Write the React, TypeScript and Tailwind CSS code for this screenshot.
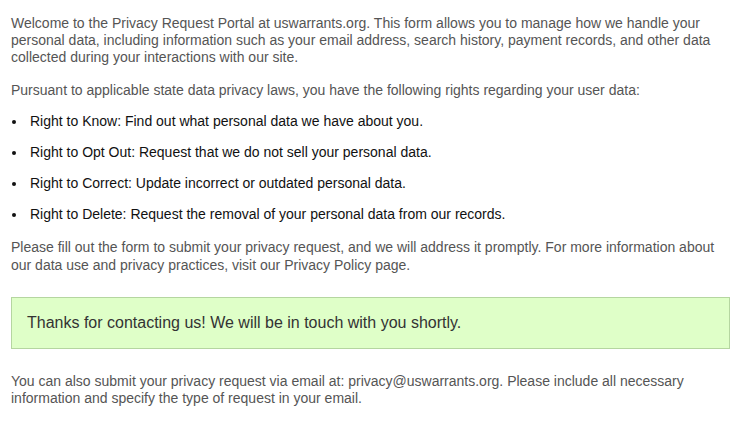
const RIGHTS = [
  'Right to Know: Find out what personal data we have about you.',
  'Right to Opt Out: Request that we do not sell your personal data.',
  'Right to Correct: Update incorrect or outdated personal data.',
  'Right to Delete: Request the removal of your personal data from our records.',
];

export default function App() {
  return (
    <div className="bg-white w-[736px] h-[428px] overflow-hidden font-['Liberation_Sans',Arial,sans-serif] text-[14px] leading-[17px] text-[#555]">
      <div className="w-[719px] ml-[11px] pt-[15px]">
        <p>
          Welcome to the Privacy Request Portal at uswarrants.org. This form allows you to manage how we handle your
          personal data, including information such as your email address, search history, payment records, and other
          data collected during your interactions with our site.
        </p>
        <p className="mt-[16px]">
          Pursuant to applicable state data privacy laws, you have the following rights regarding your user data:
        </p>
        <ul className="mt-[14px] flex flex-col gap-[14px] text-[#111]">
          {RIGHTS.map((r) => (
            <li key={r} className="flex items-center">
              <span className="w-[4px] h-[4px] rounded-full bg-[#111] ml-[1px] mr-[14px]" />
              <span>{r}</span>
            </li>
          ))}
        </ul>
        <p className="mt-[16px] leading-[17.5px]">
          Please fill out the form to submit your privacy request, and we will address it promptly. For more information
          about our data use and privacy practices, visit our Privacy Policy page.
        </p>
        <div className="mt-[23px] border border-[#b5d6a0] bg-[#dfffc8] px-[15px] py-[16px] text-[16px] leading-[18px] text-[#333]">
          Thanks for contacting us! We will be in touch with you shortly.
        </div>
        <p className="mt-[24px] leading-[16.5px]">
          You can also submit your privacy request via email at: privacy@uswarrants.org. Please include all necessary
          information and specify the type of request in your email.
        </p>
      </div>
    </div>
  );
}
